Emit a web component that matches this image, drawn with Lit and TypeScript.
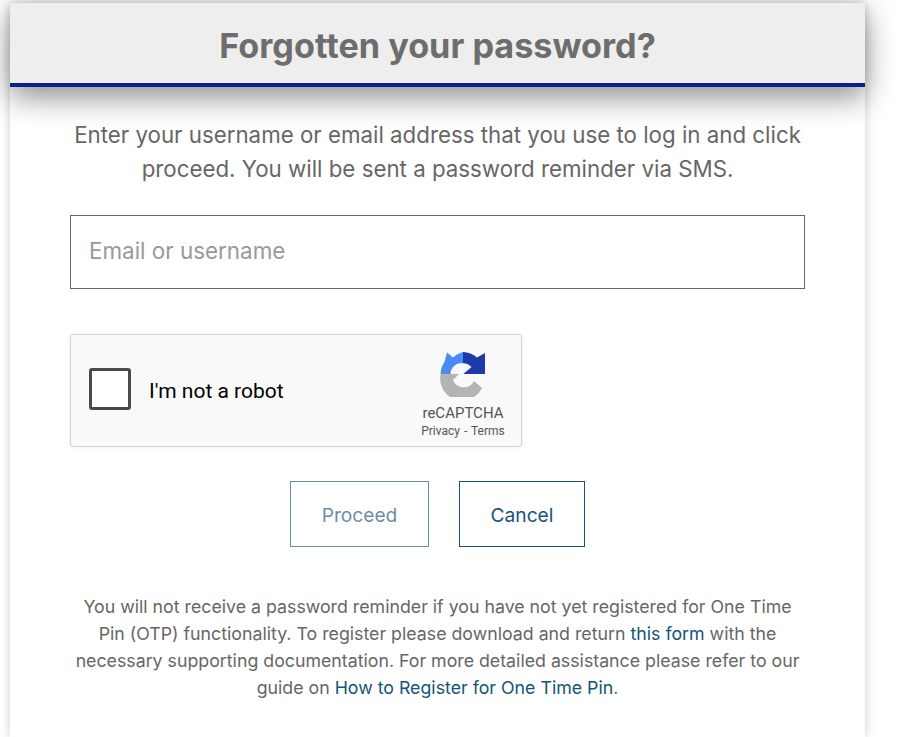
import { LitElement, html, css } from "lit";
import { customElement } from "lit/decorators.js";

@customElement("app-root")
export class AppRoot extends LitElement {
  static styles = css`
    :host { display: block; height: 737px; overflow: hidden; background: #fff; font-family: "Inter", "Liberation Sans", sans-serif; }
    .modal { width: 855px; margin: 3px 0 0 10px; height: 734px; background: #fff; box-shadow: 0 0 10px rgba(0,0,0,.2); display: flex; flex-direction: column; align-items: center; }
    .head { align-self: stretch; height: 80px; box-sizing: content-box; background: #eee; border-bottom: 4px solid #0a2188; box-shadow: 0 10px 30px rgba(0,0,0,.45); display: flex; align-items: center; justify-content: center; }
    h1 { margin: 0; padding-top: 5px; font: 700 34.2px "Inter", sans-serif; color: #6d6d6d; }
    .intro { margin: 31px 0 0; font-size: 22.3px; line-height: 34px; color: #666; text-align: center; width: 760px; }
    .input { margin-top: 29px; width: 735px; height: 74px; box-sizing: border-box; border: 1px solid #666; padding: 0 0 3px 18px; font-size: 22.4px; color: #999; display: flex; align-items: center; }
    .captcha { align-self: flex-start; margin: 45px 0 0 60px; width: 452px; height: 113px; box-sizing: border-box; background: #f9f9f9; border: 1px solid #d3d3d3; border-radius: 3px; box-shadow: 0 0 4px rgba(0,0,0,.08); display: flex; align-items: center; padding-left: 18px; font-family: Roboto, sans-serif; }
    .box { width: 42px; height: 42px; box-sizing: border-box; border: 3px solid #4a4a4a; border-radius: 3px; background: #fff; margin-bottom: 4px; }
    .label { margin-left: 18px; font-size: 21px; color: #000; flex: 1; }
    .brand { width: 108px; margin-right: 4px; display: flex; flex-direction: column; align-items: center; color: #555; padding-top: 7px; }
    .brand svg { width: 46px; height: 46px; }
    .rc { font-size: 15px; margin-top: 7px; }
    .terms { font-size: 12px; margin-top: 2px; word-spacing: 1px; }
    .btns { margin-top: 34px; display: flex; gap: 30px; }
    .btn { height: 66px; box-sizing: border-box; border: 1px solid #155478; padding-top: 2px; display: flex; align-items: center; justify-content: center; font-size: 19.2px; color: #155478; }
    .p { width: 139px; opacity: .65; }
    .c { width: 126px; }
    .note { margin: 46px 0 0; width: 730px; font-size: 17.75px; line-height: 27px; color: #666; text-align: center; }
    a { color: #155478; text-decoration: none; }
  `;
  render() {
    return html`<div class="modal">
      <div class="head"><h1>Forgotten your password?</h1></div>
      <p class="intro">Enter your username or email address that you use to log in and click proceed. You will be sent a password reminder via SMS.</p>
      <div class="input">Email or username</div>
      <div class="captcha"><div class="box"></div><div class="label">I'm not a robot</div>
        <div class="brand"><svg viewBox="5 6 46 46"><path d="M28 7V18.2A11 11 0 0 0 15.5 29H5.6A22 22 0 0 1 9.5 17L12 7.5 18 12.4A22 22 0 0 1 28 7Z" fill="#4a8af4"/><path d="M28 7A22 22 0 0 1 42 12.5L50 8V29H28.4L36.5 22A11 11 0 0 0 28 18.2Z" fill="#1c3aa9"/><path d="M5.6 29H24L18 35A11.5 11.5 0 0 0 39 36L47 43A22 22 0 0 1 5.6 29Z" fill="#b4b4b4"/></svg><div class="rc">reCAPTCHA</div><div class="terms">Privacy - Terms</div></div></div>
      <div class="btns"><div class="btn p">Proceed</div><div class="btn c">Cancel</div></div>
      <p class="note">You will not receive a password reminder if you have not yet registered for One Time Pin (OTP) functionality. To register please download and return <a>this form</a> with the necessary supporting documentation. For more detailed assistance please refer to our guide on <a>How to Register for One Time Pin</a>.</p>
    </div>`;
  }
}
